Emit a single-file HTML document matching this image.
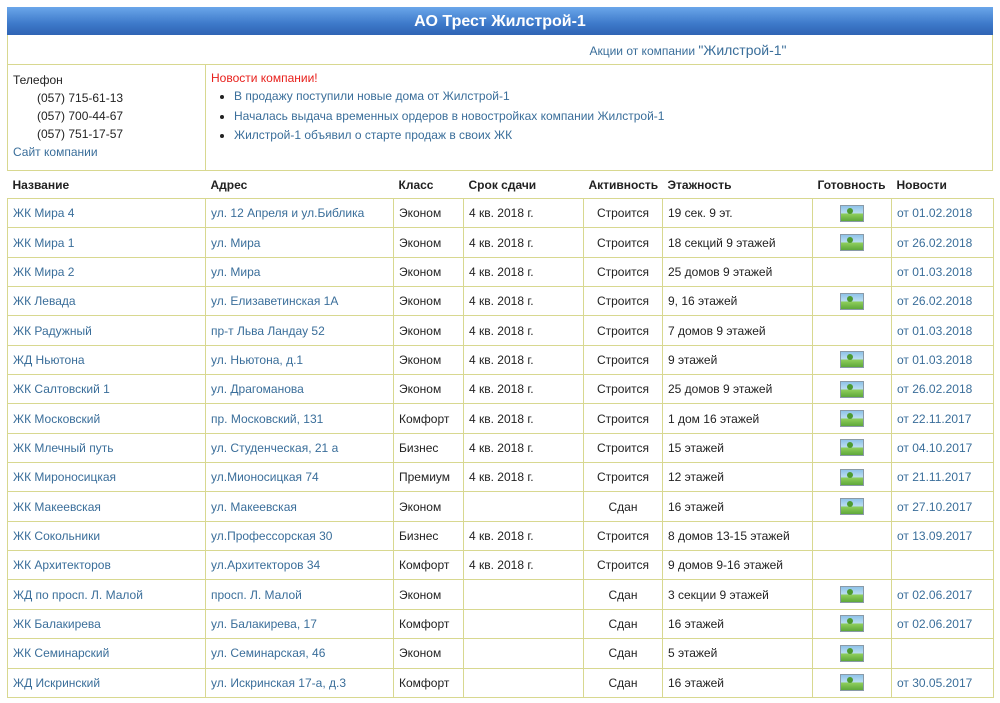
<!DOCTYPE html>
<html><head><meta charset="utf-8"><style>
body{margin:0;background:#fff;font-family:"Liberation Sans",Arial,sans-serif;font-size:12px;color:#222;}
.wrap{position:absolute;left:7px;top:7px;width:986px;}
.hdr{height:28px;background:linear-gradient(#6aa6ea,#3d79c9 60%,#2f64b4);color:#fff;font-weight:bold;font-size:16px;text-align:center;line-height:30px;}
.box{border:1px solid #d8d890;border-top:none;}
a{color:#3a6e9a;text-decoration:none;}
.akc{height:29px;line-height:31px;text-align:center;padding-left:376px;}
.akc a{font-size:12px}.akc b{font-weight:normal;font-size:14px;color:#3a6e9a}
.info{display:flex;height:105px;border-top:1px solid #d8d890;}
.info .l{width:192px;border-right:1px solid #d8d890;padding:6px 0 0 5px;line-height:18px;}
.info .r{padding:6px 0 0 5px;}
.info ul{margin:2px 0 0;padding-left:23px;}
.info li{line-height:19.5px;}
table{border-collapse:collapse;table-layout:fixed;width:986px;}
th{text-align:left;height:27px;font-weight:bold;padding:0 5px;border:none;}
td{border:1px solid #d8d890;height:28.35px;padding:0 5px;white-space:nowrap;overflow:hidden;}
td.c{text-align:center}
.im{display:inline-block;width:22px;height:15px;border:1px solid #8a9aa8;background:linear-gradient(#8fc3e8 0,#b9dcf0 45%,#8ccc5a 55%,#5ea83a);position:relative;vertical-align:middle}
.im:after{content:"";position:absolute;left:6px;top:2px;width:6px;height:6px;border-radius:50%;background:#4d9a30}
</style></head><body>
<div class="wrap">
<div class="hdr">АО Трест Жилстрой-1</div>
<div class="box">
<div class="akc"><a>Акции от компании <b>"Жилстрой-1"</b></a></div>
<div class="info">
<div class="l">Телефон<div style="padding-left:24px">(057) 715-61-13<br>(057) 700-44-67<br>(057) 751-17-57</div><a>Сайт компании</a></div>
<div class="r"><span style="color:#e8201c">Новости компании!</span>
<ul><li><a>В продажу поступили новые дома от Жилстрой-1</a></li><li><a>Началась выдача временных ордеров в новостройках компании Жилстрой-1</a></li><li><a>Жилстрой-1 объявил о старте продаж в своих ЖК</a></li></ul></div>
</div></div>
<table>
<colgroup><col style="width:198px"><col style="width:188px"><col style="width:70px"><col style="width:120px"><col style="width:79px"><col style="width:150px"><col style="width:79px"><col style="width:102px"></colgroup>
<tr><th>Название</th><th>Адрес</th><th>Класс</th><th>Срок сдачи</th><th>Активность</th><th>Этажность</th><th>Готовность</th><th>Новости</th></tr>
<tr><td><a>ЖК Мира 4</a></td><td><a>ул. 12 Апреля и ул.Библика</a></td><td>Эконом</td><td>4 кв. 2018 г.</td><td class="c">Строится</td><td>19 сек. 9 эт.</td><td class="c"><span class="im"></span></td><td><a>от 01.02.2018</a></td></tr>
<tr><td><a>ЖК Мира 1</a></td><td><a>ул. Мира</a></td><td>Эконом</td><td>4 кв. 2018 г.</td><td class="c">Строится</td><td>18 секций 9 этажей</td><td class="c"><span class="im"></span></td><td><a>от 26.02.2018</a></td></tr>
<tr><td><a>ЖК Мира 2</a></td><td><a>ул. Мира</a></td><td>Эконом</td><td>4 кв. 2018 г.</td><td class="c">Строится</td><td>25 домов 9 этажей</td><td class="c"></td><td><a>от 01.03.2018</a></td></tr>
<tr><td><a>ЖК Левада</a></td><td><a>ул. Елизаветинская 1А</a></td><td>Эконом</td><td>4 кв. 2018 г.</td><td class="c">Строится</td><td>9, 16 этажей</td><td class="c"><span class="im"></span></td><td><a>от 26.02.2018</a></td></tr>
<tr><td><a>ЖК Радужный</a></td><td><a>пр-т Льва Ландау 52</a></td><td>Эконом</td><td>4 кв. 2018 г.</td><td class="c">Строится</td><td>7 домов 9 этажей</td><td class="c"></td><td><a>от 01.03.2018</a></td></tr>
<tr><td><a>ЖД Ньютона</a></td><td><a>ул. Ньютона, д.1</a></td><td>Эконом</td><td>4 кв. 2018 г.</td><td class="c">Строится</td><td>9 этажей</td><td class="c"><span class="im"></span></td><td><a>от 01.03.2018</a></td></tr>
<tr><td><a>ЖК Салтовский 1</a></td><td><a>ул. Драгоманова</a></td><td>Эконом</td><td>4 кв. 2018 г.</td><td class="c">Строится</td><td>25 домов 9 этажей</td><td class="c"><span class="im"></span></td><td><a>от 26.02.2018</a></td></tr>
<tr><td><a>ЖК Московский</a></td><td><a>пр. Московский, 131</a></td><td>Комфорт</td><td>4 кв. 2018 г.</td><td class="c">Строится</td><td>1 дом 16 этажей</td><td class="c"><span class="im"></span></td><td><a>от 22.11.2017</a></td></tr>
<tr><td><a>ЖК Млечный путь</a></td><td><a>ул. Студенческая, 21 а</a></td><td>Бизнес</td><td>4 кв. 2018 г.</td><td class="c">Строится</td><td>15 этажей</td><td class="c"><span class="im"></span></td><td><a>от 04.10.2017</a></td></tr>
<tr><td><a>ЖК Мироносицкая</a></td><td><a>ул.Мионосицкая 74</a></td><td>Премиум</td><td>4 кв. 2018 г.</td><td class="c">Строится</td><td>12 этажей</td><td class="c"><span class="im"></span></td><td><a>от 21.11.2017</a></td></tr>
<tr><td><a>ЖК Макеевская</a></td><td><a>ул. Макеевская</a></td><td>Эконом</td><td></td><td class="c">Сдан</td><td>16 этажей</td><td class="c"><span class="im"></span></td><td><a>от 27.10.2017</a></td></tr>
<tr><td><a>ЖК Сокольники</a></td><td><a>ул.Профессорская 30</a></td><td>Бизнес</td><td>4 кв. 2018 г.</td><td class="c">Строится</td><td>8 домов 13-15 этажей</td><td class="c"></td><td><a>от 13.09.2017</a></td></tr>
<tr><td><a>ЖК Архитекторов</a></td><td><a>ул.Архитекторов 34</a></td><td>Комфорт</td><td>4 кв. 2018 г.</td><td class="c">Строится</td><td>9 домов 9-16 этажей</td><td class="c"></td><td></td></tr>
<tr><td><a>ЖД по просп. Л. Малой</a></td><td><a>просп. Л. Малой</a></td><td>Эконом</td><td></td><td class="c">Сдан</td><td>3 секции 9 этажей</td><td class="c"><span class="im"></span></td><td><a>от 02.06.2017</a></td></tr>
<tr><td><a>ЖК Балакирева</a></td><td><a>ул. Балакирева, 17</a></td><td>Комфорт</td><td></td><td class="c">Сдан</td><td>16 этажей</td><td class="c"><span class="im"></span></td><td><a>от 02.06.2017</a></td></tr>
<tr><td><a>ЖК Семинарский</a></td><td><a>ул. Семинарская, 46</a></td><td>Эконом</td><td></td><td class="c">Сдан</td><td>5 этажей</td><td class="c"><span class="im"></span></td><td></td></tr>
<tr><td><a>ЖД Искринский</a></td><td><a>ул. Искринская 17-а, д.3</a></td><td>Комфорт</td><td></td><td class="c">Сдан</td><td>16 этажей</td><td class="c"><span class="im"></span></td><td><a>от 30.05.2017</a></td></tr>
</table>
</div>
</body></html>
